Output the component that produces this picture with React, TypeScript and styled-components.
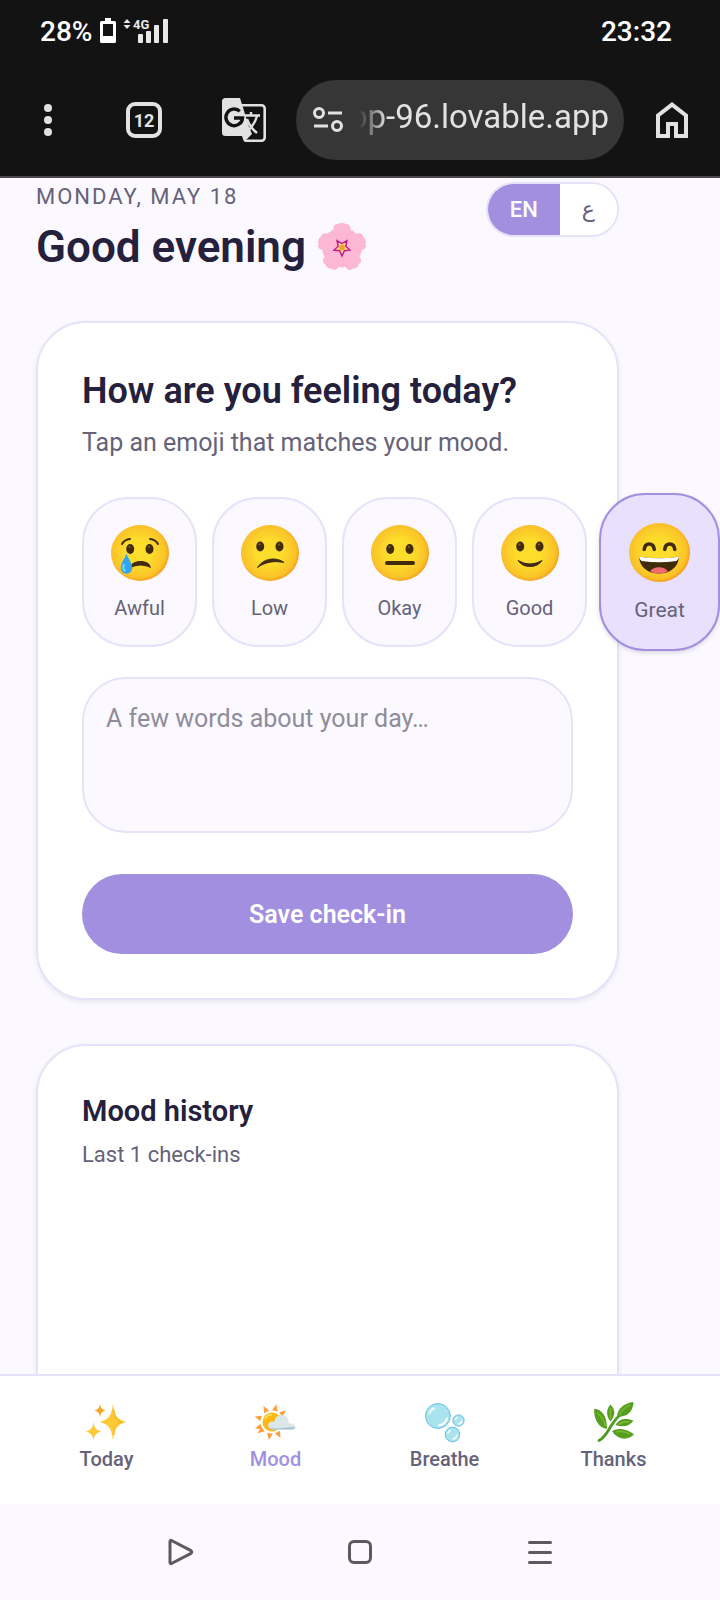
import React, { useState } from "react";
import styled, { createGlobalStyle, ThemeProvider } from "styled-components";

const theme = {
  colors: {
    chrome: "#131313",
    chromeIcon: "#e2e2e2",
    pill: "#363636",
    page: "#fbf9ff",
    white: "#ffffff",
    border: "#e6e2f9",
    primary: "#a28fe0",
    primarySoft: "#e8e0fd",
    ink: "#25203c",
    muted: "#65627a",
    placeholder: "#8f8c9b",
  },
};

type MoodId = "awful" | "low" | "okay" | "good" | "great";

const MOODS: { id: MoodId; label: string }[] = [
  { id: "awful", label: "Awful" },
  { id: "low", label: "Low" },
  { id: "okay", label: "Okay" },
  { id: "good", label: "Good" },
  { id: "great", label: "Great" },
];

const BatteryIcon = () => (
  <svg width="16" height="26" viewBox="0 0 16 26" aria-hidden="true">
    <path
      fillRule="evenodd"
      fill="#fff"
      d="M5 0h6v3h3.500a1.500 1.500 0 0 1 1.500 1.500v19a1.500 1.500 0 0 1-1.500 1.500h-13A1.500 1.500 0 0 1 0 23.500v-19A1.500 1.500 0 0 1 1.500 3H5zM3 6v12h10V6z"
    />
  </svg>
);

const SignalIcon = () => (
  <svg width="46" height="26" viewBox="0 0 46 26" aria-hidden="true">
    <path fill="#e8e8e8" d="M3 1l3.500 4h-7zM3 11l3.500-4h-7z" />
    <text
      x="9"
      y="11"
      fill="#e8e8e8"
      fontFamily="Roboto, sans-serif"
      fontSize="13"
      fontWeight="700"
    >
      4G
    </text>
    <g fill="#e8e8e8">
      <rect x="14" y="16" width="5" height="9" rx="1" />
      <rect x="22" y="13" width="5" height="12" rx="1" />
      <rect x="30" y="7" width="5" height="18" rx="1" />
      <rect x="39" y="1" width="5" height="24" rx="1" />
    </g>
  </svg>
);

const DotsIcon = () => (
  <svg width="8" height="32" viewBox="0 0 8 32" fill="#e2e2e2" aria-hidden="true">
    <circle cx="4" cy="4" r="4" />
    <circle cx="4" cy="16" r="4" />
    <circle cx="4" cy="28" r="4" />
  </svg>
);

const TranslateIcon = () => (
  <svg width="44" height="44" viewBox="0 0 44 44" aria-hidden="true">
    <path
      fill="none"
      stroke="#e2e2e2"
      strokeWidth="2.600"
      d="M20 7.300h19.500a3.200 3.200 0 0 1 3.200 3.200v29a3.200 3.200 0 0 1-3.200 3.200H23"
    />
    <path fill="#e2e2e2" d="M3.500 0H18l9 29 3 7-8 8-3.500-6H3.500A3.500 3.500 0 0 1 0 34.500v-31A3.500 3.500 0 0 1 3.500 0z" />
    <path fill="#131313" d="M0 38h20l2 6H0z" />
    <path
      fill="none"
      stroke="#131313"
      strokeWidth="3.400"
      d="M17.800 13.200A8.300 8.300 0 1 0 20.500 20H12"
    />
    <path
      fill="none"
      stroke="#e2e2e2"
      strokeWidth="2.400"
      d="M23 17.500h15M29 14v3.500M35 18c-2 8-6 12-10 16M25 21c2 6 5 10 10 14"
    />
  </svg>
);

const SiteInfoIcon = () => (
  <svg
    width="30"
    height="26"
    viewBox="0 0 30 26"
    fill="none"
    stroke="#e2e2e2"
    strokeWidth="3"
    aria-hidden="true"
  >
    <circle cx="6" cy="6" r="4.500" />
    <path d="M15 6h14M1 19h14" />
    <circle cx="24" cy="19" r="4.500" />
  </svg>
);

const HomeIcon = () => (
  <svg width="32" height="36" viewBox="0 0 32 36" aria-hidden="true">
    <path
      fill="none"
      stroke="#e2e2e2"
      strokeWidth="4"
      d="M2 34V13.500L16 2.600l14 10.900V34H20V22h-8v12z"
    />
  </svg>
);

const PETAL =
  "M24 25C18 21 13 14 13 8l2.500-.8.500-3.700Q18 .5 20.500 1.500L22 .2h4l1.500 1.300Q30 .5 32 3.500l.500 3.700L35 8c0 6-5 13-11 17z";

const BlossomIcon = () => (
  <svg width="48" height="48" viewBox="0 0 48 48" aria-hidden="true">
    {[0, 72, 144, 216, 288].map((angle) => (
      <path
        key={angle}
        d={PETAL}
        fill="#fdb8d6"
        stroke="#f7a3c8"
        strokeWidth=".4"
        transform={`rotate(${angle} 24 24.500)`}
      />
    ))}
    <path
      fill="#fbd77f"
      stroke="#c2188b"
      strokeWidth="1.400"
      d="M32 27.100l-5.600.6L24 33l-2.400-5.300-5.600-.6 4.200-3.800-1.200-5.700 5 2.900 5-2.900-1.200 5.700z"
    />
    <circle cx="24" cy="24.500" r="2.800" fill="#f0a030" />
  </svg>
);

const MoodFeatures = ({ id }: { id: MoodId }) => {
  if (id === "great") {
    return (
      <>
        <path
          d="M14.500 25q.5-5 4.700-5t4.800 5M34 25q.5-5 4.700-5t4.800 5"
          fill="none"
          stroke="#422b0d"
          strokeWidth="3.400"
          strokeLinecap="round"
        />
        <path d="M9.500 32Q29 35 47.500 32C47 42 39 48 28.500 48S10 42 9.500 32z" fill="#422b0d" />
        <path d="M9.500 32Q29 35 47.500 32q-.3 3-2.500 4Q29 38.500 12 36q-2.200-1-2.500-4z" fill="#fff" />
        <path d="M20 46q3-4 8.500-4t8.500 4q-4 2-8.500 2t-8.500-2z" fill="#f06a72" />
      </>
    );
  }

  const eyeY = id === "low" || id === "good" ? 21.5 : 24;

  return (
    <>
      <g fill="#422b0d">
        <ellipse cx="19.200" cy={eyeY} rx="4" ry="4.900" />
        <ellipse cx="38.500" cy={eyeY} rx="4" ry="4.900" />
      </g>
      <g fill="#896024">
        <circle cx="18.600" cy={eyeY - 2} r="1" />
        <circle cx="37.900" cy={eyeY - 2} r="1" />
      </g>
      {id === "awful" && (
        <>
          <path
            d="M11 19q2.500-4.500 8-5M39 14q5.500.5 8 5"
            fill="none"
            stroke="#422b0d"
            strokeWidth="2"
            strokeLinecap="round"
          />
          <path d="M19 43c1-5 5-7 10.500-7S39.500 38.500 40 43q-5-2.500-10.500-2.500T19 43z" fill="#422b0d" />
          <path
            d="M15.500 28.500c1 4 5.700 9 5.700 14.500a5.700 5.700 0 0 1-11.400 0c0-5.500 4.700-10.500 5.700-14.500z"
            fill="#30a5ef"
          />
          <path d="M13 39c-1.500 3-1 6 1.500 7" fill="none" stroke="#7fd0ff" strokeWidth="2" />
        </>
      )}
      {id === "low" && (
        <path d="M16.500 42.500C23 32.500 36 32 43 37.500 33 35.500 24 37 16.500 42.500z" fill="#422b0d" stroke="#422b0d" />
      )}
      {id === "okay" && (
        <path d="M16 38h26" stroke="#422b0d" strokeWidth="4" strokeLinecap="round" />
      )}
      {id === "good" && (
        <path d="M17 35.500q12 7 24 0-4 6-12 6t-12-6z" fill="#422b0d" stroke="#422b0d" />
      )}
    </>
  );
};

const MoodFace = ({ id, large }: { id: MoodId; large: boolean }) => (
  <svg
    width={large ? 61 : 58}
    height={large ? 59 : 56}
    viewBox="0 0 58 56"
    aria-hidden="true"
  >
    <defs>
      <radialGradient id={`face-${id}`} cx=".48" cy=".48" r=".54">
        <stop offset=".4" stopColor="#fddd2c" />
        <stop offset=".86" stopColor="#fac228" />
        <stop offset="1" stopColor="#f5931e" />
      </radialGradient>
    </defs>
    <ellipse cx="29" cy="28" rx="29" ry="28" fill={`url(#face-${id})`} />
    <MoodFeatures id={id} />
  </svg>
);

const SparklesIcon = () => (
  <svg width="40" height="40" viewBox="0 0 40 40" aria-hidden="true">
    <g fill="#fdca35">
      <path d="M26 1c1.300 13 4 16.500 13.500 19C30 22.500 27.300 26 26 39c-1.300-13-4-16.500-13.500-19C22 17.500 24.700 14 26 1z" />
      <path d="M6.500 20c.8 6 2.500 8 8 9.500-5.500 1.500-7.200 3-8 9-.8-6-2.500-7.500-8-9 5.500-1.500 7.200-3.500 8-9.500z" />
      <path fill="#f6a623" d="M13 1.500c.6 4.500 1.700 6 5.500 7-3.800 1-4.900 2.500-5.500 7-.6-4.500-1.700-6-5.500-7 3.800-1 4.900-2.500 5.500-7z" />
    </g>
    <path
      d="M27 8c.5 8 2.500 10.500 8 12-5.500 1.500-7.500 4-8 13"
      fill="none"
      stroke="#f5b02c"
      strokeWidth="1"
    />
  </svg>
);

const SunCloudIcon = () => (
  <svg width="40" height="40" viewBox="0 0 40 40" aria-hidden="true">
    <g fill="#ff9d3a">
      {[-112, -72, -28, 14, 50, 152, 190, 232].map((angle) => (
        <path key={angle} d="M13.200 8.500h5.600L16 1.800z" transform={`rotate(${angle} 16 20)`} />
      ))}
    </g>
    <circle cx="16" cy="20" r="9.500" fill="#fdb813" />
    <path d="M9 17c1-3 4-5 7-4" fill="none" stroke="#ffd95c" strokeWidth="2" />
    <path
      d="M16 27.500a4 4 0 0 1-1-7.800c1.500-.5 3 0 3.500.3 0-4 3-7 7-7 5 0 7.500 3.500 7 8l2 .5q5 .5 5 4-1 2-5 2z"
      fill="#dce7ea"
    />
    <path d="M12.500 25.500q8 1.500 14 .5t13-.5q-1 2-5 2H16q-2.500-.2-3.500-2z" fill="#a9c4d0" />
  </svg>
);

const BubblesIcon = () => (
  <svg width="40" height="40" viewBox="0 0 40 40" aria-hidden="true">
    <g fill="#a9e3ee" stroke="#62c3e4">
      <circle cx="12.900" cy="14" r="12.400" />
      <circle cx="27.500" cy="32.500" r="7.300" />
      <circle cx="33.500" cy="18.500" r="5.600" />
    </g>
    <g fill="none" stroke="#fff" strokeLinecap="round">
      <path strokeWidth="2.500" d="M4.500 11q1.500-3.500 4.500-4.500" opacity=".7" />
      <path strokeWidth="2" d="M14 23.500q6-1 8-7" />
      <path strokeWidth="1.500" d="M28 37q3.500-.5 4-4M23 31l2-2.500M34 22q2.500-.5 3-3M30.500 17.500l1.500-2" />
    </g>
  </svg>
);

const HerbIcon = () => (
  <svg width="40" height="40" viewBox="0 0 40 40" aria-hidden="true">
    <path
      d="M5 38.500C14 34 15 23 25 14"
      fill="none"
      stroke="#4f9a20"
      strokeWidth="2.800"
      strokeLinecap="round"
    />
    <g fill="#559f1e">
      <path d="M0 7c8 0 13 7 13 20C5 26 0 18 0 7z" />
      <path d="M16.500 2.500c5 5 5 11 0 17-5-6-4-13 0-17z" />
      <path d="M39.500 0C39 10 33 15 23 15c0-8 7-14 16.500-15z" />
      <path d="M39.500 18.500c-4 6-11 7-18 4.500 4-7 11-7 18-4.500z" />
      <path d="M40 32.500c-6 6-16 6-22-3.500 7-4 16-2 22 3.500z" />
    </g>
    <g fill="none" stroke="#7fbb35" strokeWidth="1.300">
      <path d="M3 11q6 4 8.500 13M16.500 6v11M36 3Q29 6 25 13M35 19.500q-6 0-11 3M22 30q7-2 14 2" />
    </g>
  </svg>
);

const SystemPlayIcon = () => (
  <svg width="28" height="28" viewBox="0 0 28 28" aria-hidden="true">
    <path
      fill="none"
      stroke="#5c595f"
      strokeWidth="3"
      strokeLinejoin="round"
      d="M4 3.500v21q0 1.500 1.500 1L25 15.300q1.500-1.300 0-2.600L5.500 2.500Q4 2 4 3.500z"
    />
  </svg>
);

const SystemSquareIcon = () => (
  <svg width="24" height="24" viewBox="0 0 24 24" aria-hidden="true">
    <rect x="1.500" y="1.500" width="21" height="21" rx="4.500" fill="none" stroke="#5c595f" strokeWidth="3" />
  </svg>
);

const SystemMenuIcon = () => (
  <svg width="24" height="24" viewBox="0 0 24 24" aria-hidden="true">
    <path d="M1.500 2.500h21M1.500 12.500h21M1.500 22.500h21" stroke="#5c595f" strokeWidth="3" strokeLinecap="round" />
  </svg>
);

const TABS = [
  { label: "Today", icon: <SparklesIcon /> },
  { label: "Mood", icon: <SunCloudIcon /> },
  { label: "Breathe", icon: <BubblesIcon /> },
  { label: "Thanks", icon: <HerbIcon /> },
];

const BrowserChrome = () => (
  <Chrome>
    <StatusBar>
      <StatusGroup>
        <span>28%</span>
        <BatteryIcon />
        <SignalIcon />
      </StatusGroup>
      <time>23:32</time>
    </StatusBar>
    <Toolbar>
      <ToolGroup>
        <ToolButton aria-label="Menu">
          <DotsIcon />
        </ToolButton>
        <ToolButton aria-label="Open tabs">
          <TabCount>12</TabCount>
        </ToolButton>
        <ToolButton aria-label="Translate" $wide>
          <TranslateIcon />
        </ToolButton>
      </ToolGroup>
      <AddressBar>
        <SiteInfoIcon />
        <AddressInput aria-label="Address" dir="rtl" defaultValue="app-96.lovable.app" />
      </AddressBar>
      <ToolButton aria-label="Home">
        <HomeIcon />
      </ToolButton>
    </Toolbar>
  </Chrome>
);

const App = () => {
  const [mood, setMood] = useState<MoodId>("great");
  const [lang, setLang] = useState("en");

  return (
    <ThemeProvider theme={theme}>
      <GlobalStyle />
      <Screen>
        <BrowserChrome />
        <Main>
          <Header>
            <div>
              <DateText>MONDAY, MAY 18</DateText>
              <Greeting>
                Good evening
                <BlossomIcon />
              </Greeting>
            </div>
            <LangToggle>
              <LangButton $active={lang === "en"} onClick={() => setLang("en")}>
                EN
              </LangButton>
              <LangButton $active={lang === "ar"} onClick={() => setLang("ar")} lang="ar">
                ع
              </LangButton>
            </LangToggle>
          </Header>

          <Card>
            <CardTitle>How are you feeling today?</CardTitle>
            <CardText>Tap an emoji that matches your mood.</CardText>
            <MoodRow>
              {MOODS.map(({ id, label }) => (
                <MoodButton
                  key={id}
                  $active={mood === id}
                  aria-pressed={mood === id}
                  onClick={() => setMood(id)}
                >
                  <MoodFace id={id} large={mood === id} />
                  {label}
                </MoodButton>
              ))}
            </MoodRow>
            <Note aria-label="Note" placeholder="A few words about your day…" />
            <SaveButton>Save check-in</SaveButton>
          </Card>

          <Card $fill>
            <HistoryTitle>Mood history</HistoryTitle>
            <HistoryText>Last 1 check-ins</HistoryText>
          </Card>
        </Main>

        <TabBar>
          {TABS.map(({ label, icon }) => (
            <TabLink key={label} href="#" $active={label === "Mood"}>
              {icon}
              {label}
            </TabLink>
          ))}
        </TabBar>

        <SystemBar>
          <SystemButton aria-label="Back">
            <SystemPlayIcon />
          </SystemButton>
          <SystemButton aria-label="Home screen">
            <SystemSquareIcon />
          </SystemButton>
          <SystemButton aria-label="Recent apps">
            <SystemMenuIcon />
          </SystemButton>
        </SystemBar>
      </Screen>
    </ThemeProvider>
  );
};

export default App;

const GlobalStyle = createGlobalStyle`
  * {
    box-sizing: border-box;
  }

  body {
    margin: 0;
    background: #fbf9ff;
    font-family: Roboto, "DejaVu Sans", sans-serif;
  }

  h1, h2, p {
    margin: 0;
  }

  button, input, textarea {
    font-family: inherit;
    margin: 0;
    padding: 0;
    border: 0;
  }

  button {
    cursor: pointer;
  }

  svg {
    display: block;
    flex: none;
    overflow: visible;
  }
`;

const Screen = styled.div`
  display: flex;
  flex-direction: column;
  height: 100vh;
  overflow: hidden;
`;

const Chrome = styled.div`
  flex: none;
  background: ${({ theme }) => theme.colors.chrome};
  border-bottom: 2px solid #4a484b;
`;

const StatusBar = styled.div`
  display: flex;
  align-items: center;
  justify-content: space-between;
  height: 62px;
  padding: 0 48px 0 40px;
  color: ${({ theme }) => theme.colors.white};
  font-size: 28px;
  font-weight: 500;
`;

const StatusGroup = styled.div`
  display: flex;
  align-items: center;
  gap: 8px;
`;

const Toolbar = styled.div`
  display: flex;
  align-items: center;
  gap: 24px;
  padding: 18px 24px 16px;
`;

const ToolGroup = styled.div`
  display: flex;
  gap: 48px;
`;

const ToolButton = styled.button<{ $wide?: boolean }>`
  display: flex;
  align-items: center;
  justify-content: center;
  flex: none;
  width: ${({ $wide }) => ($wide ? 56 : 48)}px;
  height: 48px;
  background: none;
`;

const TabCount = styled.span`
  display: flex;
  align-items: center;
  justify-content: center;
  width: 36px;
  height: 36px;
  border: 4px solid ${({ theme }) => theme.colors.chromeIcon};
  border-radius: 9px;
  color: ${({ theme }) => theme.colors.chromeIcon};
  font-size: 18px;
  font-weight: 700;
`;

const AddressBar = styled.div`
  display: flex;
  align-items: center;
  flex: 1;
  min-width: 0;
  gap: 16px;
  height: 80px;
  padding: 0 15px 0 17px;
  border-radius: 40px;
  background: ${({ theme }) => theme.colors.pill};
`;

const AddressInput = styled.input`
  flex: 1;
  min-width: 0;
  height: 48px;
  margin-bottom: 8px;
  background: none;
  color: ${({ theme }) => theme.colors.chromeIcon};
  font-size: 33px;
  mask-image: linear-gradient(to right, transparent, #000 28px);
`;

const Main = styled.main`
  display: flex;
  flex-direction: column;
  flex: 1;
  min-height: 0;
  overflow: hidden;
  padding: 4px 101px 0 36px;
`;

const Header = styled.header`
  display: flex;
  align-items: flex-start;
  justify-content: space-between;
  margin-bottom: 46px;
`;

const DateText = styled.p`
  margin-bottom: 7px;
  color: ${({ theme }) => theme.colors.muted};
  font-size: 22px;
  line-height: 30px;
  letter-spacing: 2px;
`;

const Greeting = styled.h1`
  display: flex;
  align-items: center;
  gap: 12px;
  color: ${({ theme }) => theme.colors.ink};
  font-size: 44px;
  font-weight: 600;
  line-height: 56px;
`;

const LangToggle = styled.div`
  display: flex;
  height: 55px;
  overflow: hidden;
  border: 2px solid ${({ theme }) => theme.colors.border};
  border-radius: 28px;
  background: ${({ theme }) => theme.colors.white};
`;

const LangButton = styled.button<{ $active: boolean }>`
  padding: 0 22px;
  background: ${({ $active, theme }) => ($active ? theme.colors.primary : theme.colors.white)};
  color: ${({ $active, theme }) => ($active ? theme.colors.white : theme.colors.muted)};
  font-size: 22px;
  font-weight: 500;
`;

const Card = styled.section<{ $fill?: boolean }>`
  display: flex;
  flex-direction: column;
  flex: ${({ $fill }) => ($fill ? "1 0 400px" : "none")};
  margin-bottom: 44px;
  padding: 44px;
  border: 2px solid ${({ theme }) => theme.colors.border};
  border-radius: 50px;
  background: ${({ theme }) => theme.colors.white};
  box-shadow: 0 2px 4px rgba(60, 50, 110, 0.1);
`;

const CardTitle = styled.h2`
  margin-bottom: 8px;
  color: ${({ theme }) => theme.colors.ink};
  font-size: 36px;
  font-weight: 600;
  line-height: 48px;
`;

const CardText = styled.p`
  color: ${({ theme }) => theme.colors.muted};
  font-size: 25px;
  line-height: 40px;
`;

const MoodRow = styled.div`
  display: flex;
  align-items: center;
  gap: 15px;
  height: 150px;
  margin: 34px 0 30px;
`;

const MoodButton = styled.button<{ $active: boolean }>`
  display: flex;
  flex: none;
  flex-direction: column;
  align-items: center;
  justify-content: center;
  gap: ${({ $active }) => ($active ? 14 : 13)}px;
  width: ${({ $active }) => ($active ? 121 : 115)}px;
  height: ${({ $active }) => ($active ? 158 : 150)}px;
  margin: ${({ $active }) => ($active ? "0 -3px" : "0")};
  padding-top: 3px;
  border: 2px solid ${({ $active, theme }) => ($active ? theme.colors.primary : theme.colors.border)};
  border-radius: 46px;
  background: ${({ $active, theme }) => ($active ? theme.colors.primarySoft : theme.colors.page)};
  box-shadow: ${({ $active }) => ($active ? "0 2px 4px rgba(60, 50, 110, 0.16)" : "none")};
  color: ${({ theme }) => theme.colors.muted};
  font-size: ${({ $active }) => ($active ? 21 : 20)}px;
  line-height: 28px;
`;

const Note = styled.textarea`
  height: 156px;
  margin-bottom: 41px;
  padding: 22px;
  border: 2px solid ${({ theme }) => theme.colors.border};
  border-radius: 44px;
  background: ${({ theme }) => theme.colors.page};
  color: ${({ theme }) => theme.colors.ink};
  font-size: 25px;
  line-height: 36px;
  resize: none;

  &::placeholder {
    color: ${({ theme }) => theme.colors.placeholder};
  }
`;

const SaveButton = styled.button`
  height: 80px;
  border-radius: 40px;
  background: ${({ theme }) => theme.colors.primary};
  color: ${({ theme }) => theme.colors.white};
  font-size: 25px;
  font-weight: 600;
`;

const HistoryTitle = styled.h2`
  margin-bottom: 7px;
  color: ${({ theme }) => theme.colors.ink};
  font-size: 29px;
  font-weight: 600;
  line-height: 42px;
`;

const HistoryText = styled.p`
  color: ${({ theme }) => theme.colors.muted};
  font-size: 22px;
  line-height: 32px;
`;

const TabBar = styled.nav`
  display: flex;
  flex: none;
  height: 130px;
  padding: 26px 22px 0;
  border-top: 2px solid ${({ theme }) => theme.colors.border};
  background: ${({ theme }) => theme.colors.white};
`;

const TabLink = styled.a<{ $active: boolean }>`
  display: flex;
  flex: 1;
  flex-direction: column;
  align-items: center;
  gap: 4px;
  color: ${({ $active, theme }) => ($active ? theme.colors.primary : theme.colors.muted)};
  font-size: 20px;
  font-weight: 500;
  line-height: 26px;
  text-decoration: none;
`;

const SystemBar = styled.div`
  display: flex;
  flex: none;
  height: 96px;
  padding: 0 90px;
  background: ${({ theme }) => theme.colors.page};
`;

const SystemButton = styled.button`
  display: flex;
  flex: 1;
  align-items: center;
  justify-content: center;
  background: none;
`;
